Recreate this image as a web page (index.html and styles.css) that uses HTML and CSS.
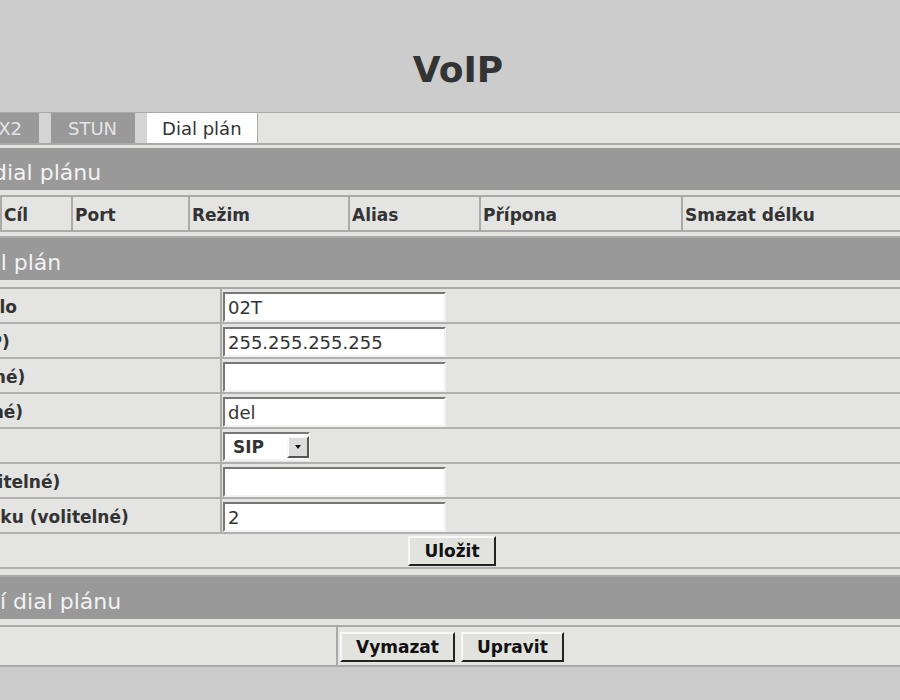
FILE: index.html
```html
<!DOCTYPE html>
<html lang="cs">
<head>
  <meta charset="UTF-8">
  <title>VoIP - Dial plán</title>
  <link rel="stylesheet" href="styles.css">
</head>
<body>
  <div class="page">
    <h1>VoIP</h1>

    <ul class="tabs">
      <li class="tab">SIP</li>
      <li class="tab">IAX2</li>
      <li class="tab">STUN</li>
      <li class="tab active">Dial plán</li>
      <li class="tab-rest"></li>
    </ul>

    <div class="content">
      <div class="bar">Definice dial plánu</div>
      <div class="list">
        <div class="th">Číslo</div>
        <div class="th">Cíl</div>
        <div class="th">Port</div>
        <div class="th">Režim</div>
        <div class="th">Alias</div>
        <div class="th">Přípona</div>
        <div class="th">Smazat délku</div>
      </div>

      <div class="bar bar-next">Přidat dial plán</div>
      <form class="form" onsubmit="return false">
        <div class="row">
          <label class="lbl">Vstupní číslo</label>
          <div class="val"><input type="text" value="02T"></div>
        </div>
        <div class="row">
          <label class="lbl">Hostitel (IP)</label>
          <div class="val"><input type="text" value="255.255.255.255"></div>
        </div>
        <div class="row">
          <label class="lbl">Síť (volitelné)</label>
          <div class="val"><input type="text" value=""></div>
        </div>
        <div class="row">
          <label class="lbl">Cíl (volitelné)</label>
          <div class="val"><input type="text" value="del"></div>
        </div>
        <div class="row">
          <label class="lbl">Režim</label>
          <div class="val">
            <span class="select">
              <select>
                <option>SIP</option>
                <option>IAX2</option>
              </select>
              <span class="select-arrow"></span>
            </span>
          </div>
        </div>
        <div class="row">
          <label class="lbl">Maska (volitelné)</label>
          <div class="val"><input type="text" value=""></div>
        </div>
        <div class="row">
          <label class="lbl">Smazat délku (volitelné)</label>
          <div class="val"><input type="text" value="2"></div>
        </div>
        <div class="row row-submit">
          <button class="btn">Uložit</button>
        </div>
      </form>

      <div class="bar bar-last">Nastavení dial plánu</div>
      <div class="actions">
        <div class="cell"></div>
        <div class="cell buttons">
          <button class="btn">Vymazat</button>
          <button class="btn">Upravit</button>
        </div>
      </div>
    </div>
  </div>
</body>
</html>
```

FILE: styles.css
```css
html, body {
  margin: 0;
  padding: 0;
  background: #cccccc;
  overflow: hidden;
}
body {
  font-family: "DejaVu Sans", Verdana, sans-serif;
  color: #333;
}
.page {
  width: 1124px;
  margin-left: -110px;
}
h1 {
  margin: 0;
  padding: 49px 0 21px 12px;
  height: 42px;
  line-height: 42px;
  text-align: center;
  font-size: 36px;
  font-weight: bold;
  color: #333;
}

/* tabs */
.tabs {
  display: flex;
  margin: 0;
  padding: 0;
  list-style: none;
  height: 30px;
  border-top: 1px solid #aaa;
  background: #d4d4d4;
}
.tab {
  padding: 0 17px;
  margin-right: 12px;
  line-height: 31px;
  font-size: 18px;
  background: #999;
  color: #e4e4e4;
  white-space: nowrap;
}
.tab:nth-child(3) {
  padding: 0 18px 0 17px;
}
.tab.active {
  padding: 0 15px;
  background: #fff;
  color: #333;
  margin-right: 0;
  border-right: 1px solid #aaa;
}
.tab-rest {
  flex: 1;
  background: #e4e4e2;
}

/* main block */
.content {
  background: #e4e4e2;
  border-top: 2px solid #aaa;
  padding-top: 3px;
}
.bar {
  height: 30px;
  padding: 12px 0 0 6px;
  line-height: 26px;
  font-size: 22px;
  background: #999;
  color: #f2f2f2;
  white-space: nowrap;
}
.bar-next {
  margin-top: 4px;
  border-top: 2px solid #aaa;
}
.bar-last {
  margin-top: 6px;
  border-top: 2px solid #aaa;
}

/* list header */
.list {
  display: grid;
  grid-template-columns: 110px 71px 117px 160px 131px 202px 1fr;
  margin-top: 5px;
  border-top: 2px solid #aaa;
  border-bottom: 2px solid #aaa;
}
.th {
  height: 31px;
  padding: 2px 0 0 2px;
  line-height: 33px;
  font-size: 17px;
  font-weight: bold;
  color: #333;
  white-space: nowrap;
  overflow: hidden;
}
.th + .th {
  border-left: 2px solid #aaa;
}

/* form */
.form {
  margin: 7px 0 0;
  border-top: 2px solid #aaa;
}
.row {
  display: grid;
  grid-template-columns: 330px 1fr;
  height: 33px;
  border-bottom: 2px solid #b0b0b0;
}
.lbl {
  padding: 2px 0 0 4px;
  line-height: 33px;
  font-size: 17px;
  font-weight: bold;
  color: #333;
  white-space: nowrap;
  overflow: hidden;
}
.val {
  border-left: 2px solid #aaa;
  padding: 3px 0 0 1px;
}
.val input {
  box-sizing: border-box;
  width: 223px;
  height: 30px;
  margin: 0;
  padding: 0 3px;
  border: 2px solid;
  border-color: #777 #f2f2f2 #f2f2f2 #777;
  background: #fff;
  font-family: "DejaVu Sans", sans-serif;
  font-size: 18px;
  color: #333;
  outline: none;
}
.select {
  position: relative;
  display: inline-block;
  width: 87px;
  height: 29px;
}
.select select {
  appearance: none;
  -webkit-appearance: none;
  box-sizing: border-box;
  width: 87px;
  height: 29px;
  margin: 0;
  padding: 0 0 0 8px;
  border: 2px solid;
  border-color: #777 #f2f2f2 #f2f2f2 #777;
  border-radius: 0;
  background: #fff;
  font-family: "DejaVu Sans", sans-serif;
  font-size: 17px;
  font-weight: bold;
  color: #333;
  outline: none;
}
.select-arrow {
  position: absolute;
  top: 4px;
  right: 1px;
  box-sizing: border-box;
  width: 22px;
  height: 22px;
  background: #dcdcdc;
  border: 2px solid;
  border-color: #fafafa #555 #555 #fafafa;
  pointer-events: none;
}
.select-arrow::after {
  content: "";
  position: absolute;
  left: 6px;
  top: 7px;
  border-left: 3px solid transparent;
  border-right: 3px solid transparent;
  border-top: 4px solid #111;
}
.row-submit {
  display: flex;
  justify-content: center;
  align-items: flex-start;
  padding-top: 2px;
  height: 31px;
}

/* buttons */
.btn {
  box-sizing: border-box;
  height: 30px;
  margin: 0;
  padding: 0 14px;
  border: 2px solid;
  border-color: #f8f8f8 #222 #222 #f8f8f8;
  background: #e2e2de;
  font-family: "DejaVu Sans", sans-serif;
  font-size: 17px;
  font-weight: bold;
  color: #111;
  cursor: pointer;
}

/* last block */
.actions {
  display: grid;
  grid-template-columns: 446px 1fr;
  margin-top: 6px;
  border-top: 2px solid #aaa;
  border-bottom: 2px solid #aaa;
}
.cell {
  height: 38px;
}
.buttons {
  display: flex;
  gap: 6px;
  border-left: 2px solid #aaa;
  padding: 5px 0 0 2px;
  box-sizing: border-box;
}
```
